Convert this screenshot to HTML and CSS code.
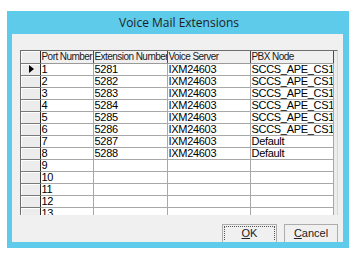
FILE: index.html
```html
<!DOCTYPE html>
<html>
<head>
<meta charset="utf-8">
<link rel="stylesheet" href="styles.css">
</head>
<body>
<div class="dialog">
  <div class="titlebar">Voice Mail Extensions</div>
  <div class="client">
    <div class="grid">
      <table>
        <colgroup>
          <col class="c-rh"><col class="c-port"><col class="c-ext"><col class="c-vs"><col class="c-pbx">
        </colgroup>
        <thead>
          <tr><th class="rh"></th><th>Port Number</th><th>Extension Number</th><th>Voice Server</th><th>PBX Node</th></tr>
        </thead>
        <tbody>
          <tr><td class="rh"><span class="arrow"></span></td><td>1</td><td>5281</td><td>IXM24603</td><td>SCCS_APE_CS1</td></tr>
          <tr><td class="rh"></td><td>2</td><td>5282</td><td>IXM24603</td><td>SCCS_APE_CS1</td></tr>
          <tr><td class="rh"></td><td>3</td><td>5283</td><td>IXM24603</td><td>SCCS_APE_CS1</td></tr>
          <tr><td class="rh"></td><td>4</td><td>5284</td><td>IXM24603</td><td>SCCS_APE_CS1</td></tr>
          <tr><td class="rh"></td><td>5</td><td>5285</td><td>IXM24603</td><td>SCCS_APE_CS1</td></tr>
          <tr><td class="rh"></td><td>6</td><td>5286</td><td>IXM24603</td><td>SCCS_APE_CS1</td></tr>
          <tr><td class="rh"></td><td>7</td><td>5287</td><td>IXM24603</td><td>Default</td></tr>
          <tr><td class="rh"></td><td>8</td><td>5288</td><td>IXM24603</td><td>Default</td></tr>
          <tr><td class="rh"></td><td>9</td><td></td><td></td><td></td></tr>
          <tr><td class="rh"></td><td>10</td><td></td><td></td><td></td></tr>
          <tr><td class="rh"></td><td>11</td><td></td><td></td><td></td></tr>
          <tr><td class="rh"></td><td>12</td><td></td><td></td><td></td></tr>
          <tr><td class="rh"></td><td>13</td><td></td><td></td><td></td></tr>
        </tbody>
      </table>
    </div>
    <div class="buttons">
      <button class="btn focused"><span class="focus"><u>O</u>K</span></button>
      <button class="btn"><span class="focus none"><u>C</u>ancel</span></button>
    </div>
  </div>
</div>
</body>
</html>
```
FILE: styles.css
```css
html, body {
  margin: 0;
  padding: 0;
  background: #ffffff;
}
.dialog {
  margin: 11px 0 0 7px;
  width: 342px;
  height: 237px;
  background: #5ecbea;
  display: flex;
  flex-direction: column;
  box-sizing: border-box;
}
.titlebar {
  height: 23px;
  line-height: 23px;
  text-align: center;
  font-family: "Open Sans", "Noto Sans", sans-serif;
  font-size: 12px;
  color: #1e1e1e;
  padding-left: 2px;
}
.client {
  margin: 0 6px 6px 5px;
  flex: 1;
  background: #f0f0f0;
  display: flex;
  flex-direction: column;
  overflow: hidden;
}
.grid {
  margin: 16px 5px 0 8px;
  height: 169px;
  box-sizing: border-box;
  border-left: 1px solid #6e6e6e;
  border-top: 1px solid #6e6e6e;
  border-right: 1px solid #d8d8d8;
  background: #ececec;
  overflow: hidden;
}
table {
  border-collapse: collapse;
  table-layout: fixed;
  width: 312px;
  font-family: "Liberation Sans", Arial, sans-serif;
  font-size: 11px;
  color: #000;
}
.c-rh { width: 19px; }
.c-port { width: 53px; }
.c-ext { width: 74px; }
.c-vs { width: 83px; }
.c-pbx { width: 83px; }
th, td {
  height: 12px;
  padding: 0 0 0 2px;
  box-sizing: border-box;
  white-space: nowrap;
  overflow: hidden;
  text-align: left;
  line-height: 11px;
  vertical-align: middle;
}
th {
  font-weight: normal;
  font-size: 10px;
  background: #f0f0f0;
  border-right: 1px solid #4a4a4a;
  border-bottom: 1px solid #9a9a9a;
  color: #202020;
  letter-spacing: -0.55px;
  padding-left: 1px;
}
td {
  background: #ffffff;
  border-right: 1px solid #a8a8a8;
  border-bottom: 1px solid #a8a8a8;
  padding-left: 1px;
  letter-spacing: -0.3px;
}
td.rh, th.rh {
  background: #ececec;
  border-right: 1px solid #2a2a2a;
  border-bottom: 1px solid #7a7a7a;
  box-shadow: inset 1px 1px 0 #ffffff;
  padding: 0;
  text-align: center;
}
.arrow {
  display: inline-block;
  width: 0;
  height: 0;
  border-top: 4px solid transparent;
  border-bottom: 4px solid transparent;
  border-left: 5px solid #000;
  vertical-align: middle;
  margin-bottom: 1px;
  margin-left: 2px;
}
.buttons {
  display: flex;
  justify-content: flex-end;
  gap: 7px;
  margin-top: 9px;
  padding-right: 5px;
}
.btn {
  width: 55px;
  height: 18px;
  padding: 1px;
  box-sizing: border-box;
  background: #f0f0f0;
  border: 1px solid #adadad;
  border-bottom: none;
  font-family: "Liberation Sans", Arial, sans-serif;
  font-size: 11px;
  color: #222;
  display: flex;
  align-items: flex-start;
}
.btn + .btn { width: 54px; }
.focus {
  flex: 1;
  display: block;
  height: 14px;
  line-height: 12px;
  text-align: center;
  border: 1px dotted #555;
  border-bottom: none;
  box-sizing: border-box;
}
.focus.none { border-color: transparent; }
```
